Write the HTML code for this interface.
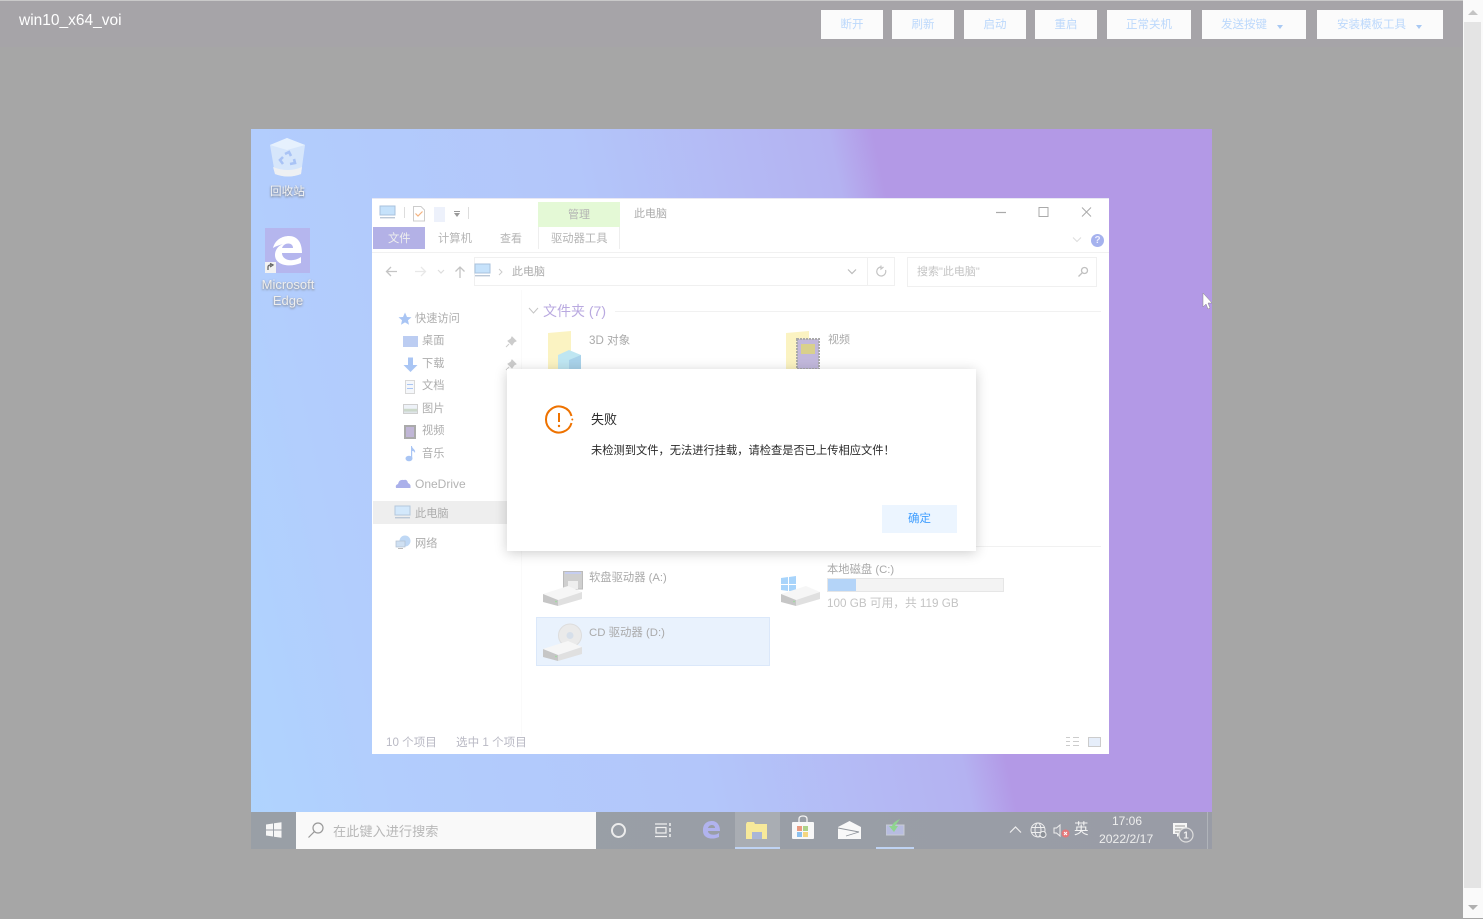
<!DOCTYPE html>
<html><head><meta charset="utf-8"><style>
*{box-sizing:border-box}
html,body{margin:0;padding:0;width:1483px;height:919px;overflow:hidden;background:#a6a6a6;font-family:"Liberation Sans","Noto Sans CJK SC",sans-serif}
.a{position:absolute}
.t{position:absolute;white-space:nowrap;line-height:1}
.btn{position:absolute;top:10px;height:29px;background:#fbfbfb;color:#bcd8fb;font-size:11.5px;line-height:29px;text-align:center;white-space:nowrap;padding-top:1px}
.btn.m{text-align:left}
.btn i{display:inline-block;width:0;height:0;border:3.5px solid transparent;border-top:4.5px solid #a9c9f3;border-bottom:0;margin-left:10px;vertical-align:-1px}
#desk{position:absolute;left:251px;top:129px;width:961px;height:720px;overflow:hidden;background:linear-gradient(78deg,#afd4fe 0%,#b2cdfd 14%,#b3c6fa 42%,#b4b2f1 65.500%,#b399e6 69.500%,#b399e6 100%);filter:blur(.3px)}
</style></head><body>
<div class="a" style="left:0;top:0;width:1463px;height:47px;background:#a6a4a8"></div>
<div class="a" style="left:0;top:0;width:1483px;height:1px;background:#c9c9c9"></div>
<div class="t" style="left:19px;top:13px;font-size:15.500px;color:#fff">win10_x64_voi</div>
<div class="btn" style="left:821px;width:62px">断开</div>
<div class="btn" style="left:892px;width:62px">刷新</div>
<div class="btn" style="left:964px;width:62px">启动</div>
<div class="btn" style="left:1035px;width:62px">重启</div>
<div class="btn" style="left:1107px;width:84px">正常关机</div>
<div class="btn m" style="left:1202px;width:104px;padding-left:19px">发送按键<i></i></div>
<div class="btn m" style="left:1317px;width:126px;padding-left:20px">安装模板工具<i></i></div>
<!-- scrollbar -->
<div class="a" style="left:1463px;top:0;width:20px;height:919px;background:#fafafa"></div>
<div class="a" style="left:1464px;top:22px;width:17px;height:866px;background:#e4e4e4"></div>
<div class="a" style="left:1468px;top:10px;width:0;height:0;border-left:5px solid transparent;border-right:5px solid transparent;border-bottom:5px solid #c4c4c4"></div>
<div class="a" style="left:1468px;top:905px;width:0;height:0;border-left:5px solid transparent;border-right:5px solid transparent;border-top:5px solid #b0b0b0"></div>
<div class="a" style="left:1463px;top:918px;width:20px;height:1px;background:#a6a6a6"></div>

<div id="desk">
 <!-- recycle bin -->
 <svg class="a" style="left:17px;top:8px" width="40" height="42" viewBox="0 0 40 42"><path d="M2 8 L19 1 L37 8 L33 37 Q20 42 7 37Z" fill="#d6e6fb"/><path d="M2 8 L19 1 L37 8 L19 13Z" fill="#e6f1fd"/><path d="M5 30 Q20 36 34 30 L33 37 Q20 42 7 37Z" fill="#eef0f3"/><path d="M17 17 L21 15 L23 19 M26 22 L27 26 L22 27 M15 27 L12 23 L15 20" fill="none" stroke="#a9c3f5" stroke-width="2.600"/></svg>
 <div class="t" style="left:19px;top:57px;font-size:11.600px;color:#f4f4f4;text-shadow:0 1px 2px #666">回收站</div>
 <!-- edge -->
 <div class="a" style="left:14px;top:99px;width:45px;height:45px;background:#b5b6ee"></div>
 <svg class="a" style="left:14px;top:99px" width="45" height="45" viewBox="0 0 45 45"><path d="M8 20 C10 12 17 8 24 8 C32 8 37 14 37 25 H17 C17 32 27 35 36 29 V35 C24 40 10 37 10 27 C10 22 13 18 18 16 C15 17 11 18 8 20Z M17 20 H28 C28 14 19 14 17 20Z" fill="#fff" fill-rule="evenodd"/><rect x="0" y="34" width="11" height="11" fill="#f2f2f2"/><path d="M3 42 L3 39 Q3 37 6 37 M5 35.500 L8 37 L5 39" stroke="#666" stroke-width="1.300" fill="none"/></svg>
 <div class="t" style="left:-3px;top:148px;width:80px;text-align:center;font-size:13px;line-height:16px;color:#eee;text-shadow:0 1px 2px #777;white-space:normal">Microsoft<br>Edge</div>
 <!-- cursor -->
 <svg class="a" style="left:951px;top:163px" width="11" height="20"><path d="M1 1 L1 15 L4 12 L6 17 L8 16 L6 11 L10 11Z" fill="#fff" stroke="#888" stroke-width=".5"/></svg>

 <!-- explorer window -->
 <div class="a" style="left:121px;top:69px;width:737px;height:556px;background:#fff;overflow:hidden">
  <div class="a" style="left:0;top:0;width:737px;height:1px;background:#e8e8f4"></div>
  <svg class="a" style="left:7px;top:7px" width="18" height="15"><rect x="1" y="1" width="15" height="9" fill="#c6e2fb" stroke="#a8c2dc"/><rect x="1" y="12" width="15" height="1.400" fill="#bcc8d6"/></svg>
  <div class="a" style="left:32px;top:9px;width:1px;height:11px;background:#ddd"></div>
  <svg class="a" style="left:40px;top:8px" width="14" height="16"><path d="M1.500 .5 H9 L12.500 4 V15 H1.500Z" fill="#fff" stroke="#ccc"/><path d="M3.500 7.500 L6 10 L10.500 5.500" stroke="#f4b27e" stroke-width="1.200" fill="none"/></svg>
  <div class="a" style="left:62px;top:9px;width:11px;height:15px;background:#edf1fb"></div>
  <div class="a" style="left:82px;top:13px;width:6px;height:1px;background:#999"></div>
  <div class="a" style="left:82px;top:15px;width:0;height:0;border:3px solid transparent;border-top:4px solid #999;border-bottom:0"></div>
  <div class="a" style="left:96px;top:9px;width:1px;height:12px;background:#ddd"></div>
  <div class="a" style="left:166px;top:4px;width:82px;height:25px;background:#e4f9d6"></div>
  <div class="t" style="left:196px;top:12px;font-size:11px;color:#b3b3b3">管理</div>
  <div class="t" style="left:262px;top:11px;font-size:11px;color:#ababab">此电脑</div>
  <svg class="a" style="left:620px;top:5px" width="105" height="18" fill="none" stroke="#aaa"><path d="M4 9.500 H14" stroke-width="1.200"/><rect x="47" y="4.500" width="9" height="9"/><path d="M90 4.500 L99 13.500 M99 4.500 L90 13.500"/></svg>
  <div class="a" style="left:1px;top:29px;width:52px;height:22px;background:#b3b1e6"></div>
  <div class="t" style="left:16px;top:36px;font-size:11.300px;color:#eee">文件</div>
  <div class="t" style="left:66px;top:36px;font-size:11.300px;color:#b5b5b5">计算机</div>
  <div class="t" style="left:128px;top:36px;font-size:11px;color:#b5b5b5">查看</div>
  <div class="a" style="left:166px;top:29px;width:82px;height:22px;border-left:1px solid #eee;border-right:1px solid #eee"></div>
  <div class="t" style="left:179px;top:36px;font-size:11.300px;color:#b5b5b5">驱动器工具</div>
  <svg class="a" style="left:700px;top:38px" width="12" height="8" fill="none" stroke="#ddd"><path d="M1 1.500 L5 5.500 L9 1.500"/></svg>
  <div class="a" style="left:719px;top:36px;width:13px;height:13px;border-radius:50%;background:#a5b2ee;color:#eef;font-size:10px;line-height:13px;text-align:center;font-weight:bold">?</div>
  <div class="a" style="left:0;top:54px;width:737px;height:1px;background:#f1f1f1"></div>
  <!-- nav -->
  <svg class="a" style="left:12px;top:66px" width="90" height="16" fill="none"><path d="M13 7.500 H3 M7 3 L2.500 7.500 L7 12" stroke="#c4c4c4" stroke-width="1.300"/><path d="M41 7.500 H31 M37 3 L41.500 7.500 L37 12" stroke="#e8e8e8" stroke-width="1.300"/><path d="M54 6 L57 9 L60 6" stroke="#ddd" stroke-width="1.200"/><path d="M76 14 V3 M71.500 7.500 L76 3 L80.500 7.500" stroke="#c4c4c4" stroke-width="1.300"/></svg>
  <div class="a" style="left:102px;top:59px;width:421px;height:29px;border:1px solid #f0f0f0"></div>
  <div class="a" style="left:495px;top:59px;width:1px;height:29px;background:#f0f0f0"></div>
  <svg class="a" style="left:102px;top:65px" width="18" height="15"><rect x="1" y="1" width="15" height="9" fill="#c6e2fb" stroke="#a8c2dc"/><rect x="1" y="12" width="15" height="1.400" fill="#bcc8d6"/></svg>
  <svg class="a" style="left:126px;top:70px" width="6" height="8" fill="none" stroke="#ccc"><path d="M1 1 L4 4 L1 7"/></svg>
  <div class="t" style="left:140px;top:68.500px;font-size:11px;color:#ababab">此电脑</div>
  <svg class="a" style="left:475px;top:70px" width="12" height="8" fill="none" stroke="#bbb" stroke-width="1.200"><path d="M1 1.500 L5 5.500 L9 1.500"/></svg>
  <svg class="a" style="left:504px;top:67px" width="12" height="13" fill="none" stroke="#c4c4c4" stroke-width="1.200"><path d="M5 2 A4.500 4.500 0 1 0 9.500 5 M5 .5 V4 L7.500 2"/></svg>
  <div class="a" style="left:535px;top:59px;width:190px;height:30px;border:1px solid #f0f0f0"></div>
  <div class="t" style="left:545px;top:69px;font-size:11px;color:#c4c4c4">搜索"此电脑"</div>
  <svg class="a" style="left:705px;top:68px" width="12" height="12" fill="none" stroke="#c0c0c0" stroke-width="1.300"><circle cx="7.500" cy="4.500" r="3"/><path d="M5 7 L1.500 10.500"/></svg>
  <div class="a" style="left:149px;top:92px;width:1px;height:446px;background:#fafafa"></div>
  <!-- sidebar -->
  <svg class="a" style="left:26px;top:114px" width="14" height="13"><path d="M7 .5 L9 5 L13.500 5.300 L10 8.300 L11 12.800 L7 10.400 L3 12.800 L4 8.300 L.5 5.300 L5 5Z" fill="#a9c5f4"/></svg>
  <div class="t" style="left:43px;top:116px;font-size:11.200px;color:#adadad">快速访问</div>
  <div class="a" style="left:31px;top:138px;width:15px;height:11px;background:#bccdf2"></div>
  <div class="t" style="left:50px;top:138px;font-size:11.200px;color:#adadad">桌面</div>
  <svg class="a" style="left:31px;top:159px" width="15" height="16"><path d="M5 .5 H10 V8 H14.500 L7.500 15 L.5 8 H5Z" fill="#a9c5f4"/></svg>
  <div class="t" style="left:50px;top:161px;font-size:11.200px;color:#adadad">下载</div>
  <svg class="a" style="left:133px;top:138px" width="12" height="12"><path d="M7 1 L11 5 L9 6 L7 9 L3 5 L6 3Z M4 8 L1 11" fill="#ccc" stroke="#ccc"/></svg>
  <svg class="a" style="left:133px;top:161px" width="12" height="12"><path d="M7 1 L11 5 L9 6 L7 9 L3 5 L6 3Z M4 8 L1 11" fill="#ccc" stroke="#ccc"/></svg>
  <div class="a" style="left:33px;top:182px;width:10px;height:14px;background:#f5f7fa;border:1px solid #d8d8d8"></div>
  <div class="a" style="left:35px;top:186px;width:6px;height:5px;border-top:1px solid #a9c5f4;border-bottom:1px solid #a9c5f4"></div>
  <div class="t" style="left:50px;top:183px;font-size:11.200px;color:#adadad">文档</div>
  <div class="a" style="left:31px;top:206px;width:15px;height:10px;background:linear-gradient(#eef2f8 40%,#c4d4c0 60%,#e4e8f0);border:1px solid #cfcfcf"></div>
  <div class="t" style="left:50px;top:206px;font-size:11.200px;color:#adadad">图片</div>
  <div class="a" style="left:32px;top:227px;width:12px;height:14px;background:#c0b6d6;border:2px solid #aaa"></div>
  <div class="t" style="left:50px;top:228px;font-size:11.200px;color:#adadad">视频</div>
  <svg class="a" style="left:33px;top:247px" width="12" height="17" fill="#a9c5f4"><ellipse cx="4" cy="13.500" rx="3.500" ry="2.800"/><path d="M6 13 V1 L7 1 C7 4 11 4 10 8 C9 6 8 6 7.200 6 V13Z"/></svg>
  <div class="t" style="left:50px;top:251px;font-size:11.200px;color:#adadad">音乐</div>
  <svg class="a" style="left:23px;top:280px" width="17" height="11"><path d="M1 10 Q0 7 3 6 Q4 1 9 2 Q12 1 13 5 Q16 6 15.500 10Z" fill="#aab0ea"/></svg>
  <div class="t" style="left:43px;top:280px;font-size:12px;color:#b3b3b3">OneDrive</div>
  <div class="a" style="left:1px;top:303px;width:140px;height:23px;background:#eeeeee"></div>
  <svg class="a" style="left:22px;top:307px" width="18" height="15"><rect x="1" y="1" width="15" height="9" fill="#d3e8fb" stroke="#b4c8dc"/><rect x="1" y="12" width="15" height="1.400" fill="#bcc8d6"/></svg>
  <div class="t" style="left:43px;top:311px;font-size:11.200px;color:#adadad">此电脑</div>
  <svg class="a" style="left:23px;top:337px" width="17" height="15"><circle cx="10" cy="6" r="5.500" fill="#bfd8f5"/><rect x="1" y="6" width="9" height="6" fill="#cfe0f2" stroke="#b0bfd0" stroke-width=".7"/><rect x="3" y="13" width="5" height="1" fill="#bbb"/></svg>
  <div class="t" style="left:43px;top:341px;font-size:11.200px;color:#adadad">网络</div>
  <!-- main -->
  <svg class="a" style="left:156px;top:109px" width="12" height="8" fill="none" stroke="#c4c4c4"><path d="M1 1 L5.500 6 L10 1"/></svg>
  <div class="t" style="left:171px;top:105.500px;font-size:14px;color:#b9a9e0">文件夹 (7)</div>
  <div class="a" style="left:243px;top:113px;width:486px;height:1px;background:#f1f1f1"></div>
  <svg class="a" style="left:176px;top:133px" width="34" height="40"><path d="M0 2 L23 0 V40 H0Z" fill="#fbf3c2"/><path d="M10 24 L21 19 L33 24 V40 H10Z" fill="#bfe6f2"/><path d="M21 29 L33 24 V40 H21Z" fill="#a9d2ea"/></svg>
  <div class="t" style="left:217px;top:137px;font-size:11.600px;color:#aaa">3D 对象</div>
  <svg class="a" style="left:414px;top:133px" width="34" height="40"><path d="M0 2 L23 0 V40 H0Z" fill="#fbf3c2"/><rect x="11" y="8" width="22" height="30" fill="#c2b8dc" stroke="#aaa" stroke-width="2" stroke-dasharray="2 1"/><rect x="15" y="13" width="14" height="10" fill="#d9d08c"/></svg>
  <div class="t" style="left:456px;top:137px;font-size:11px;color:#aaa">视频</div>
  <div class="a" style="left:370px;top:348px;width:359px;height:1px;background:#f1f1f1"></div>
  <!-- drives -->
  <div class="a" style="left:164px;top:419px;width:234px;height:49px;background:#e9f2fd;border:1px solid #dbe8fa"></div>
  <svg class="a" style="left:170px;top:370px" width="42" height="40"><path d="M21.500 3.500 H40.500 V21 H21.500Z" fill="#cfcfcf" stroke="#bbb"/><rect x="23" y="4" width="16" height="2" fill="#c5cdf0"/><rect x="26" y="13" width="10" height="8" fill="#eee"/><path d="M1 26 L26 18 L40 24 L16 32Z" fill="#f6f6f6"/><path d="M1 26 L16 32 V38 L1 34Z" fill="#c6c6c6"/><path d="M16 32 L40 24 V31 L16 38Z" fill="#e0e0e0"/><circle cx="14" cy="33.500" r=".9" fill="#9ddb9d"/></svg>
  <div class="t" style="left:217px;top:375px;font-size:11.300px;color:#aaa">软盘驱动器 (A:)</div>
  <svg class="a" style="left:408px;top:370px" width="42" height="40"><path d="M1 10 L8 9 V16 H1Z M9 9 L16 8 V16 H9Z M1 17 H8 V23 L1 22Z M9 17 H16 V24 L9 23Z" fill="#a8d4fb"/><path d="M1 26 L26 18 L40 24 L16 32Z" fill="#f6f6f6"/><path d="M1 26 L16 32 V38 L1 34Z" fill="#c6c6c6"/><path d="M16 32 L40 24 V31 L16 38Z" fill="#e0e0e0"/><circle cx="14" cy="33.500" r=".9" fill="#9ddb9d"/></svg>
  <div class="t" style="left:455px;top:367px;font-size:11.300px;color:#aaa">本地磁盘 (C:)</div>
  <div class="a" style="left:455px;top:380px;width:177px;height:14px;background:#f3f3f3;border:1px solid #e6e6e6"></div>
  <div class="a" style="left:456px;top:381px;width:28px;height:12px;background:#b4d4f8"></div>
  <div class="t" style="left:455px;top:400px;font-size:11.700px;color:#c4c4c4">100 GB 可用，共 119 GB</div>
  <svg class="a" style="left:170px;top:425px" width="42" height="40"><circle cx="28" cy="12.500" r="11.500" fill="#eaeaea" stroke="#ddd"/><circle cx="28" cy="12.500" r="3.500" fill="#d6dfea"/><path d="M1 26 L26 18 L40 24 L16 32Z" fill="#f6f6f6"/><path d="M1 26 L16 32 V38 L1 34Z" fill="#c6c6c6"/><path d="M16 32 L40 24 V31 L16 38Z" fill="#e0e0e0"/><circle cx="14" cy="33.500" r=".9" fill="#9ddb9d"/></svg>
  <div class="t" style="left:217px;top:430px;font-size:11.400px;color:#aaa">CD 驱动器 (D:)</div>
  <!-- status -->
  <div class="t" style="left:14px;top:539px;font-size:11.600px;color:#b9b9c4">10 个项目</div>
  <div class="t" style="left:84px;top:539px;font-size:11.600px;color:#b9b9c4">选中 1 个项目</div>
  <svg class="a" style="left:693px;top:537px" width="44" height="13" fill="none" stroke="#ccc"><path d="M1 2.500 H5 M1 6.500 H5 M1 10.500 H5 M8 2.500 H14 M8 6.500 H14 M8 10.500 H14"/><rect x="23.500" y="2.500" width="12" height="9" fill="#e6eefa"/></svg>
 </div>

 <!-- taskbar -->
 <div class="a" style="left:0;top:683px;width:961px;height:37px;background:linear-gradient(90deg,#999fa6,#999fa6 30%,#999ca6 100%)"></div>
 <svg class="a" style="left:15px;top:693px" width="16" height="16" fill="#f6f6f6"><path d="M0 2.500 L7 1.500 V7.500 H0Z M8 1.300 L15.500 .2 V7.500 H8Z M0 8.500 H7 V14.500 L0 13.500Z M8 8.500 H15.500 V15.800 L8 14.700Z"/></svg>
 <div class="a" style="left:45px;top:683px;width:300px;height:37px;background:#f9f9f9"></div>
 <svg class="a" style="left:56px;top:692px" width="18" height="18" fill="none" stroke="#999" stroke-width="1.200"><circle cx="11" cy="7" r="5"/><path d="M7.300 10.700 L1.500 16.500"/></svg>
 <div class="t" style="left:82px;top:696px;font-size:13.200px;color:#b8b8b8">在此键入进行搜索</div>
 <div class="a" style="left:360px;top:694px;width:15px;height:15px;border:2px solid #ececec;border-radius:50%"></div>
 <svg class="a" style="left:404px;top:694px" width="17" height="15" fill="none" stroke="#f0f0f0" stroke-width="1.200"><path d="M0 1 H12 M0 13.500 H12 M1 4.500 H11 V10 H1Z"/><path d="M15 0 V3 M15 5 V9 M15 11 V14" stroke-width="1.500"/></svg>
 <svg class="a" style="left:451px;top:691px" width="19" height="20" viewBox="0 0 19 20"><path d="M1 10 C1 3 6 1 10 1 C15 1 18 5 18 11 H6 C6 15 13 16 17 13 V17 C11 20 1 19 1 11Z M6 8 H13 C13 4 7 4 6 8Z" fill="#b1b3ee" fill-rule="evenodd"/></svg>
 <div class="a" style="left:484px;top:683px;width:45px;height:37px;background:#a9adb3"></div>
 <div class="a" style="left:484px;top:718px;width:45px;height:2px;background:#bfd3f3"></div>
 <svg class="a" style="left:495px;top:693px" width="22" height="17"><path d="M0 2 L1 0 H8 L9 2 H21 V17 H0Z" fill="#f7e99a"/><rect x="6" y="10" width="10" height="7" fill="#aab6d6"/></svg>
 <svg class="a" style="left:540px;top:685px" width="24" height="26"><rect x="1" y="8" width="22" height="17" rx="1" fill="#f8f8f8"/><path d="M8 8 V5 Q8 2 12 2 Q16 2 16 5 V8" fill="none" stroke="#f4f4f4" stroke-width="1.300"/><rect x="6" y="12" width="5" height="5" fill="#ea9a80"/><rect x="12" y="12" width="5" height="5" fill="#aed28a"/><rect x="6" y="18" width="5" height="5" fill="#8cc0ee"/><rect x="12" y="18" width="5" height="5" fill="#f4d680"/></svg>
 <svg class="a" style="left:587px;top:692px" width="23" height="18"><path d="M0 6 L11.500 0 L23 6 V18 H0Z" fill="#f8f8f8"/><path d="M0 7 L21 11 L8 15" fill="none" stroke="#90959c" stroke-width=".9"/></svg>
 <div class="a" style="left:625px;top:718px;width:38px;height:2px;background:#bfd3f3"></div>
 <svg class="a" style="left:635px;top:690px" width="20" height="17"><path d="M0 6 H18 V16 H0Z" fill="#b7bce0" stroke="#c8ccd4"/><path d="M14 0 Q7 3 6 7 L3 7 L8 13 L12 7 L9 7 Q11 4 14 0Z" fill="#8fd48f"/></svg>
 <svg class="a" style="left:758px;top:696px" width="14" height="9" fill="none" stroke="#eee" stroke-width="1.200"><path d="M1 7.500 L6.500 2 L12 7.500"/></svg>
 <svg class="a" style="left:779px;top:693px" width="18" height="17" fill="none" stroke="#eee"><circle cx="8" cy="8" r="7"/><ellipse cx="8" cy="8" rx="3" ry="7"/><path d="M1.500 5.500 H14.500 M1.500 10.500 H14.500"/><circle cx="13" cy="12.500" r="3" fill="#8a8f96"/></svg>
 <svg class="a" style="left:802px;top:694px" width="18" height="16"><path d="M1 5 H3.500 L7 2 V13 L3.500 10 H1Z" fill="none" stroke="#eee"/><circle cx="12.500" cy="10.500" r="4" fill="#e5787a"/><path d="M11 9 L14 12 M14 9 L11 12" stroke="#fff"/></svg>
 <div class="t" style="left:823px;top:694px;font-size:14.500px;color:#f2f2f2">英</div>
 <div class="t" style="left:861px;top:686px;font-size:12px;color:#eeeeee">17:06</div>
 <div class="t" style="left:848px;top:704px;font-size:12.200px;color:#eeeeee">2022/2/17</div>
 <svg class="a" style="left:921px;top:693px" width="24" height="22"><path d="M1 1 H15 V12 H8 L5 15 V12 H1Z" fill="#f6f6f6"/><path d="M3 4 H13 M3 7 H13 M3 10 H10" stroke="#999" /><circle cx="14" cy="13" r="7" fill="#999ca6" stroke="#ddd" stroke-width="1.200"/><text x="14" y="16.500" font-size="10" fill="#eee" text-anchor="middle" font-family="Liberation Sans" font-weight="bold">1</text></svg>
 <div class="a" style="left:956px;top:683px;width:1px;height:37px;background:#b0b4ba"></div>
</div>

<!-- dialog -->
<div class="a" style="left:507px;top:369px;width:469px;height:182px;background:#fff;box-shadow:0 2px 12px rgba(0,0,0,.2)"></div>
<svg class="a" style="left:544px;top:405px" width="30" height="29" fill="none" stroke="#ee7200" stroke-width="2"><path d="M27.500 11 A13 13 0 1 0 27.500 18"/><circle cx="28.300" cy="14.500" r="1" fill="#ee7200" stroke="none"/><path d="M15 8 V17"/><circle cx="15" cy="21" r="1.200" fill="#ee7200" stroke="none"/></svg>
<div class="t" style="left:591px;top:413px;font-size:13px;color:#2a2a2a">失败</div>
<div class="t" style="left:591px;top:446px;font-size:11.250px;color:#2a2a2a">未检测到文件，无法进行挂载，请检查是否已上传相应文件！</div>
<div class="a" style="left:882px;top:505px;width:75px;height:28px;background:#ecf5ff;color:#409eff;font-size:11.500px;line-height:28px;text-align:center">确定</div>
</body></html>
